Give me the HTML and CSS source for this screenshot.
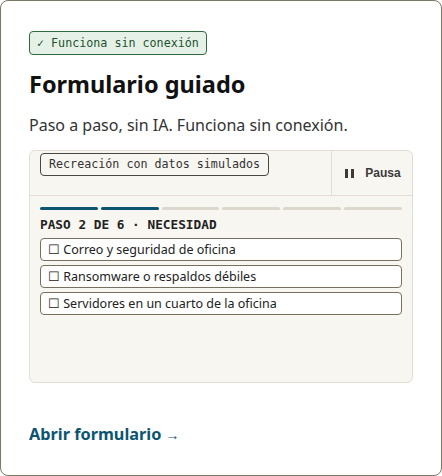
FILE: index.html
```html
<!DOCTYPE html>
<html>
<head>
  <title>Formulario guiado</title>
  <link rel="stylesheet" href="styles.css">
</head>
<body>
  <div class="card">
    <span class="badge">✓ Funciona sin conexión</span>
    <h2>Formulario guiado</h2>
    <p class="lead">Paso a paso, sin IA. Funciona sin conexión.</p>

    <div class="demo">
      <div class="demo-top">
        <div class="demo-label">
          <span class="tag">Recreación con datos simulados</span>
        </div>
        <button class="pause"><span class="pause-icon"><i></i><i></i></span>Pausa</button>
      </div>
      <div class="demo-body">
        <div class="progress">
          <span class="seg done"></span>
          <span class="seg done"></span>
          <span class="seg"></span>
          <span class="seg"></span>
          <span class="seg"></span>
          <span class="seg"></span>
        </div>
        <div class="step">PASO 2 DE 6 · NECESIDAD</div>
        <div class="options">
          <div class="option">☐ Correo y seguridad de oficina</div>
          <div class="option">☐ Ransomware o respaldos débiles</div>
          <div class="option">☐ Servidores en un cuarto de la oficina</div>
        </div>
      </div>
    </div>

    <a class="open" href="#">Abrir formulario <span class="arrow">→</span></a>
  </div>
</body>
</html>
```

FILE: styles.css
```css
body {
  margin: 0;
  font-family: "Noto Sans", sans-serif;
  background: #fff;
}

.card {
  box-sizing: border-box;
  width: 442px;
  height: 476px;
  border: 1px solid #7d7766;
  border-radius: 8px;
  padding: 29px 28px 0;
  background: #fff;
}

.badge {
  display: inline-block;
  font-family: "DejaVu Sans Mono", monospace;
  font-size: 11.7px;
  line-height: 20px;
  padding: 1px 7px;
  color: #1f5230;
  background: #e5f1e6;
  border: 1px solid #2e6a3e;
  border-radius: 4px;
}

.card h2 {
  margin: 13px 0 0;
  font-size: 23.5px;
  line-height: 32px;
  font-weight: 700;
  color: #111;
}

.lead {
  margin: 14px 0 0;
  font-size: 16px;
  line-height: 22px;
  color: #333;
}

.demo {
  margin-top: 14px;
  height: 233px;
  box-sizing: border-box;
  background: #f8f6f1;
  border: 1px solid #e2ded5;
  border-radius: 6px;
}

.demo-top {
  display: flex;
  height: 44px;
  border-bottom: 1px solid #e2ded5;
}

.demo-label {
  flex: 1;
  padding-left: 10px;
}

.tag {
  display: inline-block;
  font-family: "DejaVu Sans Mono", monospace;
  font-size: 11.7px;
  line-height: 21px;
  padding: 0 8px;
  color: #333;
  background: #f8f6f1;
  border: 1px solid #4a4640;
  border-radius: 4px;
}

.pause {
  width: 81px;
  border: none;
  border-left: 1px solid #e2ded5;
  background: transparent;
  font-family: "Liberation Sans", sans-serif;
  font-weight: 700;
  font-size: 12px;
  color: #3a3a3a;
  display: flex;
  align-items: center;
  justify-content: center;
  gap: 11px;
  padding: 0 0 0 2px;
}

.pause-icon {
  display: flex;
  gap: 3px;
}

.pause-icon i {
  width: 3px;
  height: 9px;
  background: #3d3a33;
}

.demo-body {
  padding: 11px 10px 0;
}

.progress {
  display: flex;
  gap: 3px;
}

.seg {
  flex: 1;
  height: 3px;
  border-radius: 2px;
  background: #ddd8cf;
}

.seg.done {
  background: #0b5570;
}

.step {
  margin-top: 6px;
  font-family: "DejaVu Sans Mono", monospace;
  font-weight: 700;
  font-size: 12.75px;
  line-height: 18px;
  color: #222;
}

.options {
  margin-top: 4px;
  display: flex;
  flex-direction: column;
  gap: 4px;
}

.option {
  border: 1px solid #77705f;
  border-radius: 4px;
  padding: 0 7px;
  font-size: 12.5px;
  line-height: 21px;
  color: #222;
  background: #fff;
}

.open {
  display: inline-block;
  margin-top: 40px;
  font-size: 16.3px;
  font-weight: 700;
  color: #0b5570;
  text-decoration: none;
}

.arrow {
  font-size: 14px;
  font-weight: 400;
}
```
